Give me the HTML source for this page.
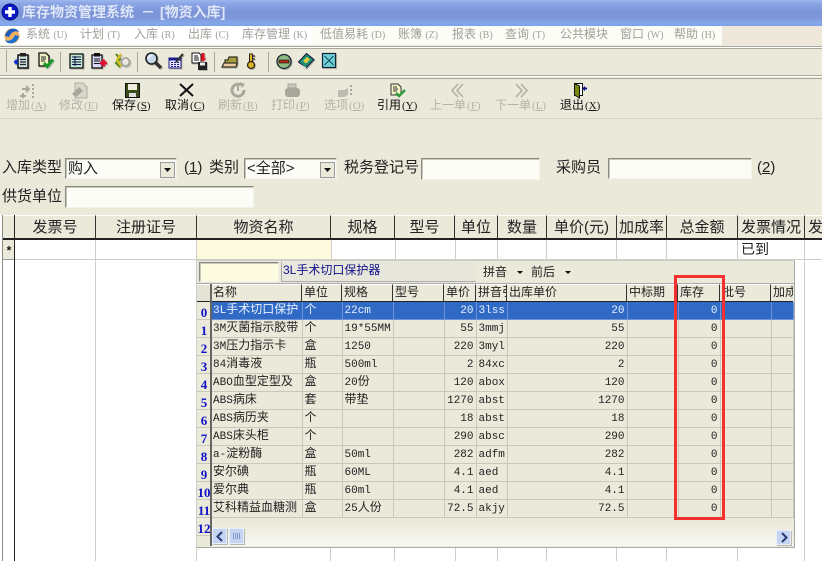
<!DOCTYPE html>
<html><head><meta charset="utf-8"><style>
html,body{margin:0;padding:0}
body{width:822px;height:561px;overflow:hidden;position:relative;background:#ebe9da;font-family:"Liberation Sans","WenQuanYi Zen Hei","Noto Sans CJK SC",sans-serif;color:#111}
.a{position:absolute;white-space:nowrap}
svg{position:absolute;overflow:visible}
.ti svg,svg.ti{filter:drop-shadow(1px 1px 0 #b8b7aa)}
.m{top:27px;font-size:12px;color:#a0a09a;line-height:14px}
.m small{font-size:10px;font-family:"Liberation Serif",serif}
.t{top:98px;font-size:12px;line-height:15px;color:#b4b3a8}
.t small{font-size:11px;font-family:"Liberation Serif",serif;padding-left:1px}
.b{color:#111}
.l{font-size:15px;line-height:18px;color:#222}
.in{background:#fdfdf8;border:1px solid;border-color:#8a8a80 #f4f3e8 #f4f3e8 #8a8a80;box-sizing:border-box;box-shadow:inset 1px 1px 0 #c8c7ba}
.v{width:1px;background:#cfcfc8}
.h{background:#ebe9da;border-right:1px solid #333;border-bottom:2px solid #222;border-top:1px solid #fff;box-sizing:border-box;top:215px;height:25px;text-align:center;font-size:15px;line-height:23px;color:#222;overflow:hidden}
.ph{position:absolute;top:284px;height:18px;background:#ebe9da;border-top:1px solid #fff;border-right:1px solid #333;border-bottom:1px solid #222;box-sizing:border-box;font-size:12px;line-height:15px;padding-left:2px;overflow:hidden;white-space:nowrap;color:#222}
table{position:absolute;left:211px;top:302px;width:582px;border-collapse:collapse;table-layout:fixed;font-size:11px;font-family:"Liberation Mono","WenQuanYi Zen Hei","Noto Sans CJK SC",monospace;color:#222}
td{height:17px;padding:0 2px;border-right:1px solid #c9c8ba;border-bottom:1px solid #c9c8ba;overflow:hidden;white-space:nowrap;line-height:16px;box-sizing:content-box}
td b{font-weight:normal;font-size:12px}
td.r{text-align:right;padding-right:2px}
tr.s td{background:#316ac5;color:#e8f0ff;border-color:#6d93d4}
.n{position:absolute;left:197px;width:14px;height:18px;font:bold 13px/21px "Liberation Serif",serif;color:#1010c8;text-align:center;background:#ebe9da;border-bottom:1px solid #c9c8ba;box-sizing:border-box}
</style></head><body>

<!-- title -->
<div class="a" style="left:0;top:0;width:822px;height:26px;background:linear-gradient(#9cb6ee 0,#8aa4e4 4px,#7b94d8 12px,#7d97da 18px,#86a8ea 23px,#7da2ea 26px)"></div>
<svg style="left:2px;top:3px" width="20" height="20" viewBox="0 0 20 20"><circle cx="8" cy="9" r="8" fill="#0a18c8" stroke="#001080"/><path d="M3 9h10M8 4v10" stroke="#fff" stroke-width="3.500"/></svg>
<div class="a" style="left:22px;top:2px;font-size:14px;line-height:20px;font-weight:bold;color:#dfe6f8">库存物资管理系统</div>
<div class="a" style="left:141px;top:2px;font-size:14px;line-height:20px;font-weight:bold;color:#dfe6f8">－</div>
<div class="a" style="left:160px;top:2px;font-size:14px;line-height:20px;font-weight:bold;color:#dfe6f8">[物资入库]</div>

<!-- menu -->
<div class="a" style="left:0;top:26px;width:311px;height:19px;background:#fff"></div>
<div class="a" style="left:311px;top:26px;width:411px;height:19px;background:#fdfdf8"></div>
<div class="a" style="left:722px;top:26px;width:100px;height:19px;background:#ede8da"></div>
<svg style="left:4px;top:27px" width="16" height="18" viewBox="0 0 16 18"><circle cx="8" cy="9" r="7.500" fill="#f0b060"/><path d="M1 9C3 0 13 0 15 5 11 3 7 5 5 10z" fill="#1b5cc0"/><path d="M15 9C13 18 3 18 1 13 5 15 9 13 11 8z" fill="#1b6ecf"/></svg>
<div class="a m" style="left:26px">系统 <small>(U)</small></div>
<div class="a m" style="left:80px">计划 <small>(T)</small></div>
<div class="a m" style="left:134px">入库 <small>(R)</small></div>
<div class="a m" style="left:188px">出库 <small>(C)</small></div>
<div class="a m" style="left:242px">库存管理 <small>(K)</small></div>
<div class="a m" style="left:320px">低值易耗 <small>(D)</small></div>
<div class="a m" style="left:398px">账簿 <small>(Z)</small></div>
<div class="a m" style="left:452px">报表 <small>(B)</small></div>
<div class="a m" style="left:505px">查询 <small>(T)</small></div>
<div class="a m" style="left:560px">公共模块</div>
<div class="a m" style="left:620px">窗口 <small>(W)</small></div>
<div class="a m" style="left:674px">帮助 <small>(H)</small></div>

<!-- toolbar rules -->
<div class="a" style="left:0;top:46px;width:822px;height:1px;background:#aaa99c"></div>
<div class="a" style="left:0;top:47px;width:822px;height:1px;background:#fff"></div>
<div class="a" style="left:0;top:48px;width:822px;height:1px;background:#aaa99c"></div>
<div class="a" style="left:0;top:75px;width:822px;height:1px;background:#aaa99c"></div>
<div class="a" style="left:0;top:76px;width:822px;height:1px;background:#fff"></div>
<div class="a" style="left:0;top:78px;width:822px;height:1px;background:#aaa99c"></div>
<div class="a" style="left:0;top:118px;width:822px;height:1px;background:#d4d3c6"></div>
<div class="a v" style="left:6px;top:50px;height:22px;background:#aaa99c"></div>
<div class="a v" style="left:60px;top:52px;height:20px;background:#aaa99c"></div>
<div class="a v" style="left:137px;top:52px;height:20px;background:#aaa99c"></div>
<div class="a v" style="left:214px;top:52px;height:20px;background:#aaa99c"></div>
<div class="a v" style="left:268px;top:52px;height:20px;background:#aaa99c"></div>

<!-- toolbar icons -->
<svg class="ti" style="left:14px;top:53px" width="16" height="16" viewBox="0 0 16 16"><rect x="4" y="2" width="10" height="13" fill="#cfe4dc" stroke="#111" stroke-width="1.500"/><rect x="6" y="0" width="6" height="3.500" fill="#222"/><path d="M6 6.500h6M6 9h6M6 11.500h6" stroke="#223" stroke-width="1.200"/><path d="M0 9h4M2.500 6.500v5" stroke="#1030c8" stroke-width="2.500"/></svg>
<svg class="ti" style="left:38px;top:52px" width="16" height="17" viewBox="0 0 16 17"><path d="M1 1h7l3 3v10H1z" fill="#f4f3c8" stroke="#111" stroke-width="1.300"/><path d="M3 5h5M3 7h5M3 9h4" stroke="#222"/><path d="M6 11l3 3.500 6-7" fill="none" stroke="#169a2a" stroke-width="3"/></svg>
<svg class="ti" style="left:69px;top:53px" width="15" height="16" viewBox="0 0 15 16"><rect x="1" y="1" width="13" height="14" fill="#bfe8d4" stroke="#111" stroke-width="1.300"/><path d="M3 4h9M3 6.500h9M3 9h9M3 11.500h9" stroke="#114" stroke-width="1.100"/><path d="M6 3v10" stroke="#114"/></svg>
<svg class="ti" style="left:91px;top:53px" width="16" height="16" viewBox="0 0 16 16"><rect x="1" y="2" width="10" height="13" fill="#d8d8f8" stroke="#111" stroke-width="1.300"/><rect x="3" y="0" width="6" height="3.500" fill="#111"/><path d="M3 6h6M3 8h6M3 10.500h6" stroke="#111"/><path d="M9 10h7M12.500 6.500v7" stroke="#e01030" stroke-width="3"/></svg>
<svg class="ti" style="left:114px;top:52px" width="17" height="17" viewBox="0 0 17 17"><path d="M2 2l4 5-4 4 4 4" stroke="#5a8a20" stroke-width="2.200" fill="none"/><path d="M7 2L3 8l4 6" stroke="#d8c020" stroke-width="2.200" fill="none"/><circle cx="11.500" cy="10" r="4" fill="#e8e8e0" stroke="#a4a49c" stroke-width="1.800"/></svg>
<svg class="ti" style="left:145px;top:52px" width="17" height="17" viewBox="0 0 17 17"><path d="M10 10l6 6" stroke="#333" stroke-width="3.500"/><circle cx="6.500" cy="6.500" r="5.500" fill="#c4d8ec" stroke="#222" stroke-width="1.600"/><path d="M3.500 6.500a3 3 0 0 1 3-3" stroke="#fff" fill="none" stroke-width="1.500"/></svg>
<svg class="ti" style="left:168px;top:53px" width="17" height="16" viewBox="0 0 17 16"><rect x="1" y="5" width="12" height="10" fill="#e8e8ff" stroke="#1a1a80"/><rect x="1" y="5" width="12" height="2.500" fill="#1a1a90"/><path d="M3 9.500h8M3 11.500h8M3 13.500h8" stroke="#1a1a90" stroke-dasharray="2 1"/><path d="M8 9l7-8" stroke="#333" stroke-width="2.200"/></svg>
<svg class="ti" style="left:191px;top:52px" width="17" height="18" viewBox="0 0 17 18"><path d="M1 1h7l2 2v8H1z" fill="#fff" stroke="#111"/><path d="M3 4h4M3 6h5M3 8h5" stroke="#111"/><rect x="7" y="10" width="9" height="8" fill="#222"/><rect x="9" y="10.500" width="5" height="3" fill="#eee"/><path d="M12 1v6" stroke="#e01020" stroke-width="3"/><path d="M9 6h6l-3 4z" fill="#e01020"/></svg>
<svg class="ti" style="left:222px;top:56px" width="16" height="12" viewBox="0 0 16 12"><path d="M3 4h3l1-3h8v8H3z" fill="#a8a040" stroke="#332" stroke-width="1.200"/><path d="M0 11l2-4h13l-1 4z" fill="#f0cca0" stroke="#332" stroke-width="1.200"/></svg>
<svg class="ti" style="left:246px;top:53px" width="10" height="16" viewBox="0 0 10 16"><path d="M3.500 1h3v8h-3z" fill="#d8b820" stroke="#322"/><circle cx="5" cy="12" r="3.500" fill="#d8b820" stroke="#322" stroke-width="1.300"/><path d="M6.500 3h2.500M6.500 6h2.500" stroke="#322" stroke-width="1.300"/></svg>
<svg class="ti" style="left:276px;top:54px" width="16" height="16" viewBox="0 0 16 16"><circle cx="8" cy="7.500" r="7" fill="#8cba80" stroke="#223" stroke-width="1.300"/><rect x="3" y="6" width="10" height="3" fill="#b02818" stroke="#111" stroke-width=".6"/></svg>
<svg class="ti" style="left:298px;top:53px" width="17" height="16" viewBox="0 0 17 16"><path d="M0.500 9l8-8.500 7.500 6-8 8.500z" fill="#1e8f78" stroke="#113"/><path d="M5 8l4-4 3 2.500-4 4z" fill="#dfd040"/><path d="M1 11l7 4" stroke="#eee" stroke-width="1.200"/></svg>
<svg class="ti" style="left:322px;top:53px" width="14" height="15" viewBox="0 0 14 15"><rect x="0.500" y="0.500" width="13" height="14" fill="#70d0d8" stroke="#123" stroke-width="1.200"/><path d="M2.500 3l9 9M11.500 3l-9 9" stroke="#125060" stroke-width="1.100"/></svg>

<!-- action toolbar -->
<svg style="left:20px;top:84px" width="16" height="15" viewBox="0 0 16 15"><path d="M2 5h7M6 2l3 3-3 3M3 9v5M0 12h6" stroke="#a8a79c" stroke-width="2" fill="none"/><path d="M12 1h2M12 5h2M12 9h2M12 13h2" stroke="#a8a79c" stroke-width="2"/></svg>
<svg style="left:72px;top:82px" width="16" height="17" viewBox="0 0 16 17"><path d="M3 1h8l4 4v11H3z" fill="#d8d7ca" stroke="#b0afa4"/><path d="M0 12l7-7 4 4-7 6z" fill="#a8a79c"/></svg>
<svg style="left:125px;top:83px" width="15" height="15" viewBox="0 0 15 15"><rect x="0.500" y="0.500" width="14" height="14" fill="#3c4c18" stroke="#111"/><rect x="3" y="1" width="9" height="6" fill="#eeeee0"/><rect x="4" y="10" width="7" height="4" fill="#ddd"/></svg>
<svg style="left:179px;top:83px" width="15" height="14" viewBox="0 0 15 14"><path d="M1 1l13 12M14 1L1 13" stroke="#111" stroke-width="2"/></svg>
<svg style="left:231px;top:82px" width="16" height="16" viewBox="0 0 16 16"><path d="M13 8a6 6 0 1 1-3-5" stroke="#a8a79c" stroke-width="3" fill="none"/><path d="M9 0l5 2-3 4z" fill="#a8a79c"/><path d="M7 4v5" stroke="#a8a79c" stroke-width="2"/></svg>
<svg style="left:284px;top:83px" width="16" height="15" viewBox="0 0 16 15"><path d="M4 1h8v4H4z" fill="#c8c7bc" stroke="#a8a79c"/><rect x="1" y="5" width="15" height="9" rx="3" fill="#a8a79c"/></svg>
<svg style="left:337px;top:85px" width="17" height="13" viewBox="0 0 17 13"><path d="M1 5h6l4-2v7l-4 2H1z" fill="#bcbbb0"/><path d="M13 1h2M13 5h2M13 9h2" stroke="#a8a79c" stroke-width="2"/></svg>
<svg style="left:390px;top:83px" width="16" height="16" viewBox="0 0 16 16"><path d="M1 1h7l3 3v8H1z" fill="#f4f3c8" stroke="#333"/><path d="M3 4h4M3 6h5M3 8h4" stroke="#333"/><path d="M6 10l3 3 6-6" fill="none" stroke="#2a9a3a" stroke-width="2.500"/></svg>
<svg style="left:451px;top:83px" width="13" height="15" viewBox="0 0 13 15"><path d="M7 1L1 7.500 7 14M12 1L6 7.500 12 14" fill="none" stroke="#b0afa4" stroke-width="1.500"/></svg>
<svg style="left:515px;top:83px" width="13" height="15" viewBox="0 0 13 15"><path d="M1 1l6 6.500L1 14M6 1l6 6.500L6 14" fill="none" stroke="#b0afa4" stroke-width="1.500"/></svg>
<svg style="left:574px;top:83px" width="14" height="15" viewBox="0 0 14 15"><path d="M0.500 0.500h8v12h-8z" fill="#fff" stroke="#111"/><path d="M0.500 0.500l5 2.500v12l-5-3z" fill="#7a8a10" stroke="#111"/><path d="M9 5.500h4" stroke="#10108a" stroke-width="2"/><path d="M11 3v5l-3-2.500z" fill="#10108a"/></svg>

<div class="a t" style="left:6px">增加<small>(<u>A</u>)</small></div>
<div class="a t" style="left:59px">修改<small>(<u>E</u>)</small></div>
<div class="a t b" style="left:112px">保存<small>(<u>S</u>)</small></div>
<div class="a t b" style="left:165px">取消<small>(<u>C</u>)</small></div>
<div class="a t" style="left:218px">刷新<small>(<u>R</u>)</small></div>
<div class="a t" style="left:271px">打印<small>(<u>P</u>)</small></div>
<div class="a t" style="left:324px">选项<small>(<u>O</u>)</small></div>
<div class="a t b" style="left:377px">引用<small>(<u>Y</u>)</small></div>
<div class="a t" style="left:430px">上一单<small>(<u>F</u>)</small></div>
<div class="a t" style="left:495px">下一单<small>(<u>L</u>)</small></div>
<div class="a t b" style="left:560px">退出<small>(<u>X</u>)</small></div>

<!-- form -->
<div class="a l" style="left:2px;top:159px">入库类型</div>
<div class="a in" style="left:65px;top:158px;width:112px;height:21px;font-size:15px;line-height:19px;padding-left:2px;color:#222">购入</div>
<div class="a" style="left:160px;top:162px;width:15px;height:16px;background:#ebe9da;border:1px solid #999;box-sizing:border-box"></div>
<svg style="left:164px;top:168px" width="8" height="5"><path d="M0 0h7L3.500 4z" fill="#111"/></svg>
<div class="a l" style="left:184px;top:159px">(<u>1</u>)</div>
<div class="a l" style="left:209px;top:159px">类别</div>
<div class="a in" style="left:244px;top:158px;width:93px;height:21px;font-size:15px;line-height:19px;padding-left:2px;color:#222">&lt;全部&gt;</div>
<div class="a" style="left:320px;top:162px;width:15px;height:16px;background:#ebe9da;border:1px solid #999;box-sizing:border-box"></div>
<svg style="left:324px;top:168px" width="8" height="5"><path d="M0 0h7L3.500 4z" fill="#111"/></svg>
<div class="a l" style="left:344px;top:159px">税务登记号</div>
<div class="a in" style="left:421px;top:158px;width:119px;height:22px"></div>
<div class="a l" style="left:556px;top:159px">采购员</div>
<div class="a in" style="left:608px;top:158px;width:144px;height:21px"></div>
<div class="a l" style="left:757px;top:159px">(<u>2</u>)</div>
<div class="a l" style="left:2px;top:188px">供货单位</div>
<div class="a in" style="left:65px;top:186px;width:189px;height:22px"></div>

<!-- main grid -->
<div class="a" style="left:0;top:239px;width:822px;height:322px;background:#fff"></div>
<div class="a" style="left:0;top:215px;width:822px;height:1px;background:#555"></div>
<div class="a h" style="left:3px;width:12px"></div>
<div class="a h" style="left:15px;width:81px">发票号</div>
<div class="a h" style="left:96px;width:101px">注册证号</div>
<div class="a h" style="left:197px;width:134px">物资名称</div>
<div class="a h" style="left:331px;width:64px">规格</div>
<div class="a h" style="left:395px;width:60px">型号</div>
<div class="a h" style="left:455px;width:43px">单位</div>
<div class="a h" style="left:498px;width:49px">数量</div>
<div class="a h" style="left:547px;width:70px">单价(元)</div>
<div class="a h" style="left:617px;width:50px">加成率</div>
<div class="a h" style="left:667px;width:71px">总金额</div>
<div class="a h" style="left:738px;width:67px">发票情况</div>
<div class="a h" style="left:805px;width:17px;border-right:0;text-align:left;padding-left:3px">发</div>
<div class="a" style="left:0;top:215px;width:2px;height:346px;background:#fff"></div>
<div class="a" style="left:2px;top:215px;width:1px;height:346px;background:#8a8a84"></div>
<div class="a" style="left:3px;top:240px;width:12px;height:20px;background:#ebe9da;border-bottom:1px solid #999;box-sizing:border-box;font:bold 12px/24px 'Liberation Mono',monospace;text-align:center">*</div>
<div class="a" style="left:14px;top:215px;width:1px;height:346px;background:#222"></div>
<div class="a" style="left:15px;top:259px;width:807px;height:1px;background:#cfcfc8"></div>
<div class="a" style="left:197px;top:240px;width:134px;height:19px;background:#fdfbdf"></div>
<div class="a" style="left:741px;top:241px;font-size:14px;line-height:17px;color:#222">已到</div>
<div class="a v" style="left:95px;top:240px;height:321px"></div>
<div class="a v" style="left:196px;top:240px;height:20px"></div>
<div class="a v" style="left:331px;top:240px;height:20px"></div>
<div class="a v" style="left:395px;top:240px;height:20px"></div>
<div class="a v" style="left:455px;top:240px;height:20px"></div>
<div class="a v" style="left:497px;top:240px;height:20px"></div>
<div class="a v" style="left:546px;top:240px;height:20px"></div>
<div class="a v" style="left:616px;top:240px;height:20px"></div>
<div class="a v" style="left:666px;top:240px;height:20px"></div>
<div class="a v" style="left:737px;top:240px;height:20px"></div>
<div class="a v" style="left:804px;top:240px;height:321px"></div>
<div class="a v" style="left:196px;top:548px;height:13px"></div>
<div class="a v" style="left:330px;top:548px;height:13px"></div>
<div class="a v" style="left:394px;top:548px;height:13px"></div>
<div class="a v" style="left:455px;top:548px;height:13px"></div>
<div class="a v" style="left:497px;top:548px;height:13px"></div>
<div class="a v" style="left:546px;top:548px;height:13px"></div>
<div class="a v" style="left:616px;top:548px;height:13px"></div>
<div class="a v" style="left:666px;top:548px;height:13px"></div>
<div class="a v" style="left:737px;top:548px;height:13px"></div>

<!-- dropdown panel -->
<div class="a" style="left:196px;top:260px;width:599px;height:288px;background:#ebe9da;border-right:1px solid #aaa;border-bottom:1px solid #aaa;border-left:1px solid #ccc;border-top:1px solid #ccc;box-sizing:border-box"></div>
<div class="a in" style="left:199px;top:262px;width:80px;height:20px;background:#fdfbdf"></div>
<div class="a" style="left:281px;top:262px;width:195px;height:20px;background:#e8e7dc;border-left:1px solid #aaa;border-bottom:1px solid #aaa;box-sizing:border-box;font-size:12px;line-height:16px;color:#10108a;padding-left:1px">3L手术切口保护器</div>
<div class="a" style="left:483px;top:264px;font-size:12px;line-height:16px;color:#222">拼音</div>
<svg style="left:517px;top:271px" width="6" height="4"><path d="M0 0h6L3 3z" fill="#111"/></svg>
<div class="a" style="left:531px;top:264px;font-size:12px;line-height:16px;color:#222">前后</div>
<svg style="left:565px;top:271px" width="6" height="4"><path d="M0 0h6L3 3z" fill="#111"/></svg>
<div class="a" style="left:197px;top:283px;width:597px;height:1px;background:#aaa"></div>

<div class="ph" style="left:197px;width:14px;border-right:0;background:#e4e3d6"></div>
<div class="ph" style="left:211px;width:91px">名称</div>
<div class="ph" style="left:302px;width:40px">单位</div>
<div class="ph" style="left:342px;width:51px">规格</div>
<div class="ph" style="left:393px;width:51px">型号</div>
<div class="ph" style="left:444px;width:32px">单价</div>
<div class="ph" style="left:476px;width:31px">拼音引</div>
<div class="ph" style="left:507px;width:120px">出库单价</div>
<div class="ph" style="left:627px;width:51px">中标期</div>
<div class="ph" style="left:678px;width:42px">库存</div>
<div class="ph" style="left:720px;width:51px">批号</div>
<div class="ph" style="left:771px;width:22px;border-right:0">加成</div>

<div class="n" style="top:302px">0</div><div class="n" style="top:320px">1</div><div class="n" style="top:338px">2</div><div class="n" style="top:356px">3</div><div class="n" style="top:374px">4</div><div class="n" style="top:392px">5</div><div class="n" style="top:410px">6</div><div class="n" style="top:428px">7</div><div class="n" style="top:446px">8</div><div class="n" style="top:464px">9</div><div class="n" style="top:482px">10</div><div class="n" style="top:500px">11</div><div class="n" style="top:518px">12</div>

<table>
<colgroup><col style="width:91px"><col style="width:40px"><col style="width:51px"><col style="width:51px"><col style="width:32px"><col style="width:31px"><col style="width:120px"><col style="width:51px"><col style="width:42px"><col style="width:51px"><col style="width:22px"></colgroup>
<tr class="s"><td>3L<b>手术切口保护</b></td><td><b>个</b></td><td>22cm</td><td></td><td class="r">20</td><td>3lss</td><td class="r">20</td><td></td><td class="r">0</td><td></td><td></td></tr>
<tr><td>3M<b>灭菌指示胶带</b></td><td><b>个</b></td><td>19*55MM</td><td></td><td class="r">55</td><td>3mmj</td><td class="r">55</td><td></td><td class="r">0</td><td></td><td></td></tr>
<tr><td>3M<b>压力指示卡</b></td><td><b>盒</b></td><td>1250</td><td></td><td class="r">220</td><td>3myl</td><td class="r">220</td><td></td><td class="r">0</td><td></td><td></td></tr>
<tr><td>84<b>消毒液</b></td><td><b>瓶</b></td><td>500ml</td><td></td><td class="r">2</td><td>84xc</td><td class="r">2</td><td></td><td class="r">0</td><td></td><td></td></tr>
<tr><td>ABO<b>血型定型及</b></td><td><b>盒</b></td><td>20<b>份</b></td><td></td><td class="r">120</td><td>abox</td><td class="r">120</td><td></td><td class="r">0</td><td></td><td></td></tr>
<tr><td>ABS<b>病床</b></td><td><b>套</b></td><td><b>带垫</b></td><td></td><td class="r">1270</td><td>abst</td><td class="r">1270</td><td></td><td class="r">0</td><td></td><td></td></tr>
<tr><td>ABS<b>病历夹</b></td><td><b>个</b></td><td></td><td></td><td class="r">18</td><td>abst</td><td class="r">18</td><td></td><td class="r">0</td><td></td><td></td></tr>
<tr><td>ABS<b>床头柜</b></td><td><b>个</b></td><td></td><td></td><td class="r">290</td><td>absc</td><td class="r">290</td><td></td><td class="r">0</td><td></td><td></td></tr>
<tr><td>a-<b>淀粉酶</b></td><td><b>盒</b></td><td>50ml</td><td></td><td class="r">282</td><td>adfm</td><td class="r">282</td><td></td><td class="r">0</td><td></td><td></td></tr>
<tr><td><b>安尔碘</b></td><td><b>瓶</b></td><td>60ML</td><td></td><td class="r">4.1</td><td>aed</td><td class="r">4.1</td><td></td><td class="r">0</td><td></td><td></td></tr>
<tr><td><b>爱尔典</b></td><td><b>瓶</b></td><td>60ml</td><td></td><td class="r">4.1</td><td>aed</td><td class="r">4.1</td><td></td><td class="r">0</td><td></td><td></td></tr>
<tr><td><b>艾科精益血糖测</b></td><td><b>盒</b></td><td>25<b>人份</b></td><td></td><td class="r">72.5</td><td>akjy</td><td class="r">72.5</td><td></td><td class="r">0</td><td></td><td></td></tr>
</table>

<!-- scrollbar -->
<div class="a" style="left:211px;top:518px;width:582px;height:28px;background:linear-gradient(#ebe9da 0,#ebe9da 6px,#f4f3ec 20px,#f8f8f4 28px)"></div>
<div class="a" style="left:210px;top:284px;width:2px;height:262px;background:#666"></div>
<div class="a" style="left:212px;top:528px;width:15px;height:16px;background:#c6d4f4;border:1px solid #e8eefc;box-sizing:border-box;box-shadow:1px 1px 0 #b8b7aa"></div>
<svg style="left:216px;top:532px" width="8" height="9"><path d="M6 0L1.500 4.500 6 9" fill="none" stroke="#2a3a70" stroke-width="2"/></svg>
<div class="a" style="left:229px;top:528px;width:15px;height:16px;background:#c6d4f4;border:1px solid #e8eefc;box-sizing:border-box;box-shadow:1px 1px 0 #b8b7aa"></div>
<div class="a" style="left:233px;top:533px;width:7px;height:6px;background:repeating-linear-gradient(90deg,#8a9ac8 0,#8a9ac8 1px,transparent 1px,transparent 2px)"></div>
<div class="a" style="left:776px;top:530px;width:15px;height:15px;background:#c6d4f4;border:1px solid #e8eefc;box-sizing:border-box;box-shadow:1px 1px 0 #b8b7aa"></div>
<svg style="left:780px;top:533px" width="8" height="9"><path d="M2 0l4.500 4.500L2 9" fill="none" stroke="#2a3a70" stroke-width="2"/></svg>

<!-- red box -->
<div class="a" style="left:674px;top:275px;width:51px;height:245px;border:3px solid #f5302f;box-sizing:border-box"></div>
</body></html>
